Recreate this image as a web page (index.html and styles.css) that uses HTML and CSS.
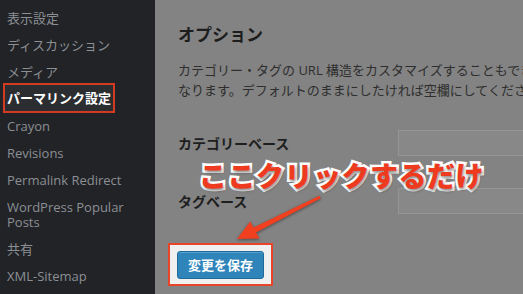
FILE: index.html
```html
<!DOCTYPE html>
<html lang="ja">
<head>
<meta charset="utf-8">
<title>パーマリンク設定</title>
<link rel="stylesheet" href="styles.css">
</head>
<body>
<div class="screen">
  <nav class="sidebar">
    <div class="item">表示設定</div>
    <div class="item">ディスカッション</div>
    <div class="item">メディア</div>
    <div class="item active">パーマリンク設定</div>
    <div class="item">Crayon</div>
    <div class="item">Revisions</div>
    <div class="item">Permalink Redirect</div>
    <div class="item">WordPress Popular Posts</div>
    <div class="item">共有</div>
    <div class="item">XML-Sitemap</div>
  </nav>
  <main class="main">
    <h2 class="heading">オプション</h2>
    <p class="desc">カテゴリー・タグの URL 構造をカスタマイズすることもできます。たとえば、カテゴリーベースに topics を使えば<br>なります。デフォルトのままにしたければ空欄にしてください。</p>
    <div class="row">
      <label class="label">カテゴリーベース</label>
      <div class="input"></div>
    </div>
    <div class="row row2">
      <label class="label">タグベース</label>
      <div class="input"></div>
    </div>
    <div class="spot">
      <button class="save">変更を保存</button>
    </div>
  </main>
  <svg class="arrow" viewBox="0 0 523 294" width="523" height="294">
    <polygon points="237,239 259.5,238.5 256,232.4 320.8,198.2 319.4,195.8 253.6,227.6 250.2,221.5" />
  </svg>
  <div class="callout">ここクリックするだけ</div>
</div>
</body>
</html>
```
FILE: styles.css
```css
html, body {
  margin: 0;
  padding: 0;
}
body {
  width: 523px;
  height: 294px;
  overflow: hidden;
  background: #838383;
}
.screen {
  position: relative;
  display: flex;
  width: 523px;
  height: 294px;
  overflow: hidden;
  font-family: "Open Sans", "Noto Sans CJK JP", sans-serif;
}
.sidebar {
  width: 155px;
  flex: none;
  background: #212327;
  padding-top: 4.5px;
  box-sizing: border-box;
}
.item {
  padding: 6px 7px;
  font-size: 13px;
  line-height: 15px;
  color: #8c8f94;
  white-space: normal;
}
.item.active {
  width: 112px;
  box-sizing: border-box;
  margin: -2.5px 0 -0.5px 3px;
  padding: 5.5px 2px;
  border: 2px solid #d23a22;
  background: #2b2d31;
  color: #ffffff;
  font-weight: 700;
  white-space: nowrap;
}
.main {
  flex: 1;
  min-width: 0;
  padding: 23px 0 0 23px;
  overflow: hidden;
  background: #838383;
}
.heading {
  margin: 0 0 13px;
  font-size: 17px;
  line-height: 24px;
  font-weight: 700;
  color: #1d1d1d;
  white-space: nowrap;
}
.desc {
  margin: 0 0 29.5px;
  font-size: 13px;
  line-height: 20px;
  color: #2e2e2e;
  white-space: nowrap;
}
.row {
  display: flex;
  align-items: center;
  height: 26px;
}
.row2 {
  margin-top: 32px;
}
.label {
  width: 220px;
  flex: none;
  font-size: 14px;
  font-weight: 700;
  color: #1e1e1e;
}
.input {
  width: 200px;
  flex: none;
  height: 26px;
  box-sizing: border-box;
  border: 1px solid #959595;
  background: #888888;
}
.spot {
  width: fit-content;
  margin: 29px 0 0 -10px;
  padding: 6px 7px 5px 7px;
  border: 2px solid #e9432a;
  background: #f0f0f0;
}
.save {
  display: block;
  width: 87px;
  height: 28px;
  margin: 0;
  padding: 0;
  border: 1px solid #1f6a9b;
  border-radius: 3px;
  background: #2f84ba;
  color: #ffffff;
  font-family: "Noto Sans CJK JP", sans-serif;
  font-size: 13px;
  font-weight: 700;
  box-shadow: inset 0 1px 0 rgba(120, 190, 230, 0.5);
}
.arrow {
  position: absolute;
  left: 0;
  top: 0;
  fill: #f1401f;
  filter: drop-shadow(0 1px 1.5px rgba(0, 0, 0, 0.45));
}
.callout {
  position: absolute;
  left: 199px;
  top: 161px;
  font-family: "Noto Sans CJK JP", sans-serif;
  font-size: 28px;
  line-height: 28px;
  font-weight: 900;
  letter-spacing: 0.5px;
  color: #ee3a1e;
  -webkit-text-stroke: 5px #ffffff;
  paint-order: stroke fill;
  text-shadow: 1px 2px 3px rgba(0, 0, 0, 0.45);
  white-space: nowrap;
}
```
